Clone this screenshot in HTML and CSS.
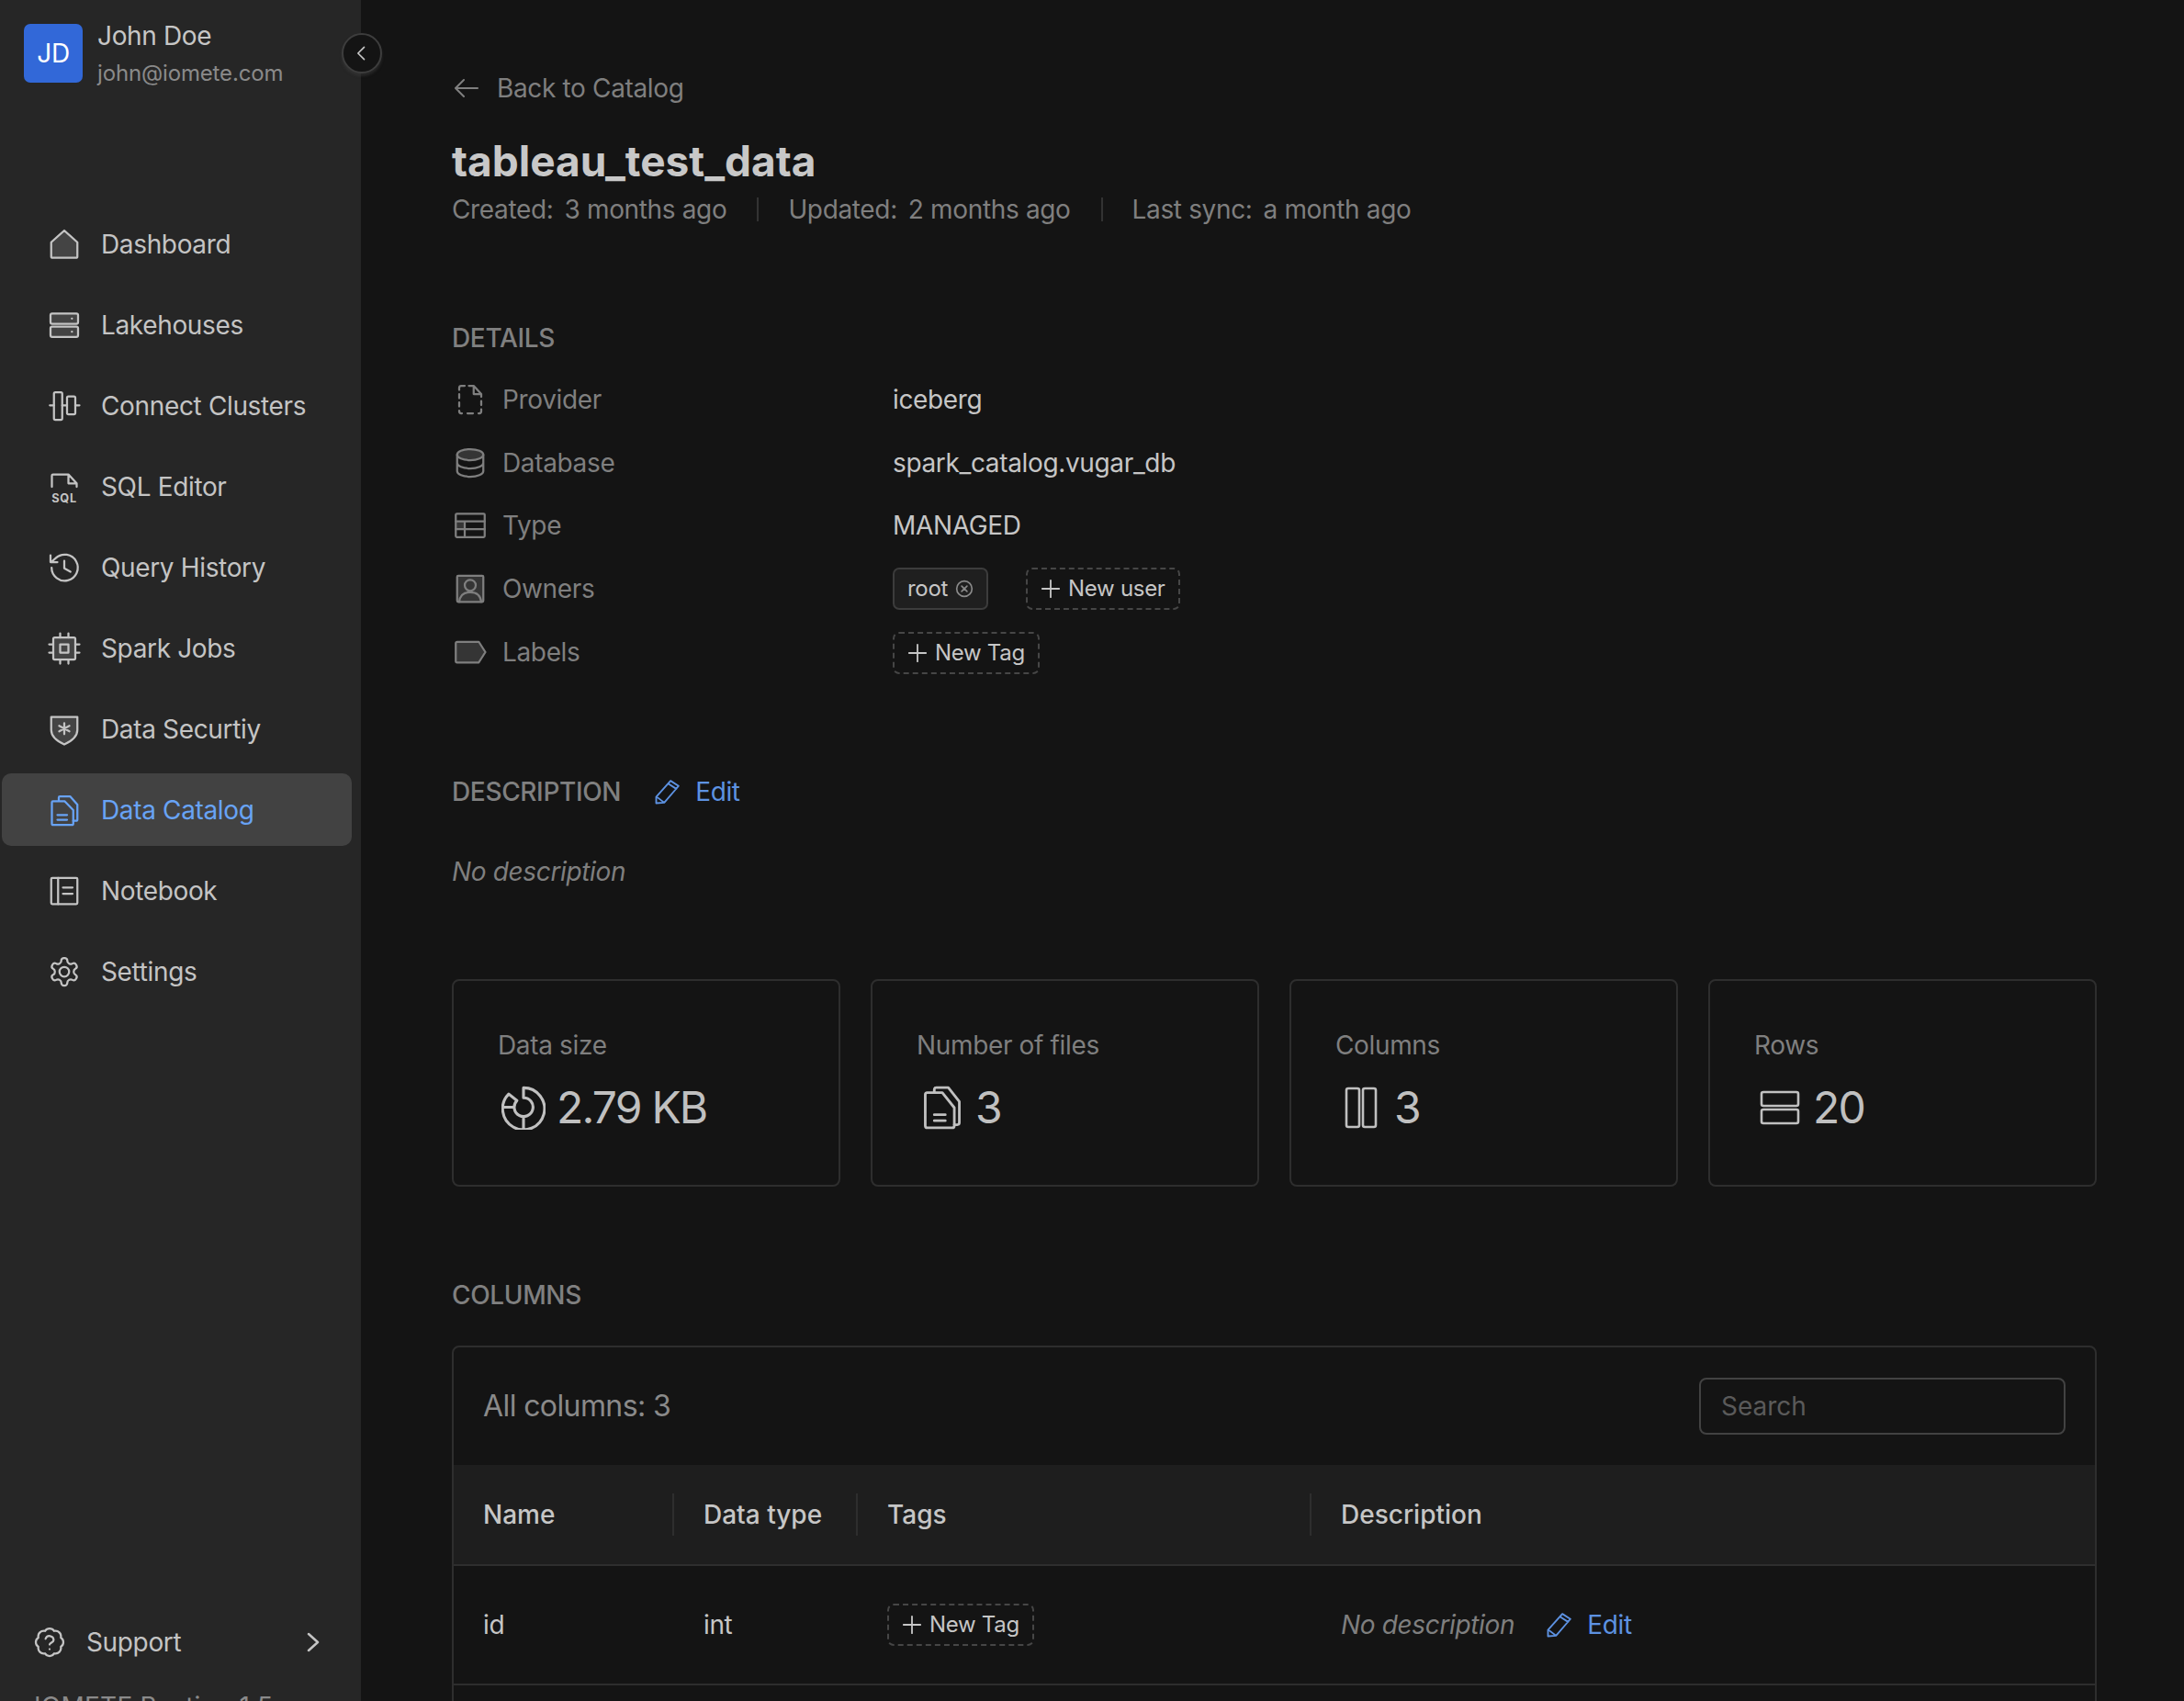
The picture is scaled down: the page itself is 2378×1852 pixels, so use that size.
FILE: index.html
```html
<!DOCTYPE html>
<html>
<head>
<meta charset="utf-8">
<title>tableau_test_data</title>
<link rel="stylesheet" href="styles.css">
</head>
<body>
<svg class="defs" xmlns="http://www.w3.org/2000/svg">
  <symbol id="i-home" viewBox="0 0 24 24"><path class="soft" d="M2.5 10.5 12 2l9.5 8.5V21a.8.8 0 0 1-.8.8H3.3a.8.8 0 0 1-.8-.8z"/></symbol>
  <symbol id="i-server" viewBox="0 0 24 24"><rect class="soft" x="2" y="3.5" width="20" height="7.5" rx="1.2"/><rect class="soft" x="2" y="13" width="20" height="7.5" rx="1.2"/><path d="M17.5 7.2h.1M17.5 16.8h.1"/></symbol>
  <symbol id="i-connect" viewBox="0 0 24 24"><rect x="4.5" y="2" width="6" height="20" rx="1"/><rect x="14" y="5" width="6" height="13" rx="1"/><path d="M1.5 11.5h3M10.5 11.500H14M20 11.5h3"/></symbol>
  <symbol id="i-sql" viewBox="0 0 24 24"><path d="M3 12V3.8a.8.8 0 0 1 .8-.8H15l6 6.500V12M15 3v6.500h6"/><text class="sqltxt" x="12" y="23">SQL</text></symbol>
  <symbol id="i-history" viewBox="0 0 24 24"><path d="M2.800 12a9.500 9.500 0 1 0 3-6.900L2.500 8M2 3v5h5M12 7v5.500l4.500 2.500"/></symbol>
  <symbol id="i-cpu" viewBox="0 0 24 24"><rect class="soft" x="4" y="4" width="16" height="16" rx="1"/><rect x="9" y="9" width="6" height="6"/><path d="M9 1v3M15 1v3M9 20v3M15 20v3M1 9h3M1 15h3M20 9h3M20 15h3"/></symbol>
  <symbol id="i-shield" viewBox="0 0 24 24"><path class="soft" d="M2.500 3h19v9.500c0 5-4 8-9.500 10.500-5.500-2.500-9.500-5.500-9.500-10.500z"/><path d="M12 7.500v8M8.300 9.500l7.400 4M15.700 9.500l-7.400 4"/></symbol>
  <symbol id="i-files" viewBox="0 0 24 24"><path d="M8 5V2.800a.8.800 0 0 1 .8-.8h7.400L21.500 8v11a.8.800 0 0 1-.8.800h-2.200"/><path d="M3 6.300a.8.800 0 0 1 .8-.8h8.400l6.300 6.500V22a.8.800 0 0 1-.8.800H3.800A.8.800 0 0 1 3 22zM7 15.500h7M7 19h7"/></symbol>
  <symbol id="i-notebook" viewBox="0 0 24 24"><rect x="2.500" y="2.500" width="19" height="19" rx=".8"/><path d="M7.500 2.500v19M11 9.500h7M11 14h7"/></symbol>
  <symbol id="i-gear" viewBox="0 0 24 24"><path d="M12.220 2h-.44a2 2 0 0 0-2 2v.18a2 2 0 0 1-1 1.730l-.43.250a2 2 0 0 1-2 0l-.15-.08a2 2 0 0 0-2.730.730l-.22.380a2 2 0 0 0 .730 2.730l.15.100a2 2 0 0 1 1 1.720v.510a2 2 0 0 1-1 1.740l-.15.090a2 2 0 0 0-.730 2.730l.22.380a2 2 0 0 0 2.730.730l.15-.08a2 2 0 0 1 2 0l.43.250a2 2 0 0 1 1 1.730V20a2 2 0 0 0 2 2h.44a2 2 0 0 0 2-2v-.18a2 2 0 0 1 1-1.730l.43-.25a2 2 0 0 1 2 0l.15.080a2 2 0 0 0 2.730-.73l.22-.39a2 2 0 0 0-.73-2.730l-.15-.08a2 2 0 0 1-1-1.740v-.5a2 2 0 0 1 1-1.740l.15-.09a2 2 0 0 0 .73-2.730l-.22-.38a2 2 0 0 0-2.730-.73l-.15.080a2 2 0 0 1-2 0l-.43-.25a2 2 0 0 1-1-1.730V4a2 2 0 0 0-2-2z"/><circle cx="12" cy="12" r="3.500"/></symbol>
  <symbol id="i-help" viewBox="0 0 24 24"><path d="M3.850 8.620a4 4 0 0 1 4.780-4.770 4 4 0 0 1 6.740 0 4 4 0 0 1 4.780 4.780 4 4 0 0 1 0 6.740 4 4 0 0 1-4.770 4.780 4 4 0 0 1-6.750 0 4 4 0 0 1-4.780-4.770 4 4 0 0 1 0-6.760Z"/><path d="M9.090 9.500a3 3 0 0 1 5.830 1c0 1.600-2.900 2-2.900 3.200M12 17h.01"/></symbol>
  <symbol id="i-dashfile" viewBox="0 0 24 24"><path d="M8 2H6M4 5V3.500A1.500 1.500 0 0 1 5.500 2M11 2h3.500L20 8v2M14.500 2v6H20M20 13v3M4 8v3M4 14v3M4 20v.5A1.500 1.500 0 0 0 5.500 22H6M10 22h4M18 22h.5a1.500 1.500 0 0 0 1.500-1.500V19"/></symbol>
  <symbol id="i-db" viewBox="0 0 24 24"><ellipse class="soft" cx="12" cy="6" rx="9.500" ry="4"/><path d="M2.500 6v12c0 2.200 4.300 4 9.500 4s9.500-1.800 9.500-4V6M2.500 12c0 2.200 4.300 4 9.500 4s9.500-1.800 9.500-4"/></symbol>
  <symbol id="i-table" viewBox="0 0 24 24"><rect class="soft noline" x="1.500" y="9" width="6.500" height="5.700"/><rect x="1.500" y="3.500" width="21" height="17" rx=".8"/><path d="M1.500 9h21M1.500 14.700h21M8 9v11.500"/></symbol>
  <symbol id="i-owner" viewBox="0 0 24 24"><rect class="soft" x="2.500" y="2.500" width="19" height="19" rx=".8"/><circle cx="12" cy="9.500" r="4"/><path d="M4 21.500c.5-4.500 3.500-7 8-7s7.500 2.500 8 7"/></symbol>
  <symbol id="i-label" viewBox="0 0 24 24"><path class="soft" d="M1.500 5.500a1 1 0 0 1 1-1h15.700l4.800 7.500-4.800 7.500H2.500a1 1 0 0 1-1-1z"/></symbol>
  <symbol id="i-pencil" viewBox="0 0 24 24"><path d="M2 22v-5.500L14.500 2.500l7 4.500L9 21.500zM12.500 5l7 4.500M2.500 16.500l6.500 5"/></symbol>
  <symbol id="i-pie" viewBox="2 1.500 20 20"><path d="M12 2.500A9.500 9.500 0 1 1 5.300 5.300L9 8.300A4.250 4.250 0 1 0 12 7zM2.600 11.300h5.200M12 15.500v6"/></symbol>
  <symbol id="i-doc2" viewBox="2 1 20 22"><path d="M8 4.500V3a1 1 0 0 1 1-1h6l5.500 7v10.500a1 1 0 0 1-1 1h-1.500"/><path d="M3.500 5.500a1 1 0 0 1 1-1h7.500l6 7.500v9a1 1 0 0 1-1 1H4.500a1 1 0 0 1-1-1zM8 15.500h5.500M8 18.500h5.500"/></symbol>
  <symbol id="i-cols" viewBox="0 0 24 24"><rect x="4" y="1.500" width="7" height="21" rx="1"/><rect x="13" y="1.500" width="7" height="21" rx="1"/></symbol>
  <symbol id="i-rows" viewBox="0 0 24 24"><rect x="2" y="3.500" width="20" height="7.500" rx="1"/><rect x="2" y="13" width="20" height="7.500" rx="1"/></symbol>
</svg>

<div class="app">
  <aside class="sidebar">
    <div class="profile">
      <div class="avatar">JD</div>
      <div class="who">
        <div class="who-name">John Doe</div>
        <div class="who-mail">john@iomete.com</div>
      </div>
    </div>
    <button class="collapse"><svg class="ico-sm" viewBox="0 0 24 24"><path d="M15 4l-8 8 8 8"/></svg></button>

    <nav class="nav">
      <a class="nav-item"><svg class="ico"><use href="#i-home"/></svg>Dashboard</a>
      <a class="nav-item"><svg class="ico"><use href="#i-server"/></svg>Lakehouses</a>
      <a class="nav-item"><svg class="ico"><use href="#i-connect"/></svg>Connect Clusters</a>
      <a class="nav-item"><svg class="ico"><use href="#i-sql"/></svg>SQL Editor</a>
      <a class="nav-item"><svg class="ico"><use href="#i-history"/></svg>Query History</a>
      <a class="nav-item"><svg class="ico"><use href="#i-cpu"/></svg>Spark Jobs</a>
      <a class="nav-item"><svg class="ico"><use href="#i-shield"/></svg>Data Securtiy</a>
      <a class="nav-item active"><svg class="ico"><use href="#i-files"/></svg>Data Catalog</a>
      <a class="nav-item"><svg class="ico"><use href="#i-notebook"/></svg>Notebook</a>
      <a class="nav-item"><svg class="ico"><use href="#i-gear"/></svg>Settings</a>
    </nav>

    <div class="support">
      <svg class="ico"><use href="#i-help"/></svg>
      <span class="support-txt">Support</span>
      <svg class="ico-chev" viewBox="0 0 24 24"><path d="M7 3l10 9-10 9"/></svg>
    </div>
    <div class="version">IOMETE Bastion 1.5</div>
  </aside>

  <main class="main">
    <a class="back"><svg class="ico-back" viewBox="0 0 28 24"><path d="M26 12H3M11 3l-9 9 9 9"/></svg>Back to Catalog</a>
    <h1 class="title">tableau_test_data</h1>
    <div class="meta">
      <span>Created:</span><span class="meta-val">3 months ago</span>
      <i class="meta-sep"></i>
      <span>Updated:</span><span class="meta-val">2 months ago</span>
      <i class="meta-sep"></i>
      <span>Last sync:</span><span class="meta-val">a month ago</span>
    </div>

    <h2 class="section details-head">DETAILS</h2>
    <div class="details">
      <div class="d-label"><svg class="ico"><use href="#i-dashfile"/></svg>Provider</div>
      <div class="d-value">iceberg</div>
      <div class="d-label"><svg class="ico"><use href="#i-db"/></svg>Database</div>
      <div class="d-value">spark_catalog.vugar_db</div>
      <div class="d-label"><svg class="ico"><use href="#i-table"/></svg>Type</div>
      <div class="d-value">MANAGED</div>
      <div class="d-label"><svg class="ico"><use href="#i-owner"/></svg>Owners</div>
      <div class="d-value chips">
        <span class="chip">root<svg class="ico-x" viewBox="0 0 24 24"><circle cx="12" cy="12" r="10"/><path d="M8.500 8.500l7 7M15.500 8.500l-7 7"/></svg></span>
        <span class="chip dashed"><svg class="ico-plus" viewBox="0 0 24 24"><path d="M12 2v20M2 12h20"/></svg>New user</span>
      </div>
      <div class="d-label"><svg class="ico"><use href="#i-label"/></svg>Labels</div>
      <div class="d-value d-end">
        <span class="chip dashed"><svg class="ico-plus" viewBox="0 0 24 24"><path d="M12 2v20M2 12h20"/></svg>New Tag</span>
      </div>
    </div>

    <div class="desc-head">
      <h2 class="section">DESCRIPTION</h2>
      <a class="edit"><svg class="ico-edit"><use href="#i-pencil"/></svg>Edit</a>
    </div>
    <p class="no-desc">No description</p>

    <div class="cards">
      <div class="card">
        <div class="card-label">Data size</div>
        <div class="card-value"><svg class="ico-big"><use href="#i-pie"/></svg>2.79 KB</div>
      </div>
      <div class="card">
        <div class="card-label">Number of files</div>
        <div class="card-value"><svg class="ico-big"><use href="#i-doc2"/></svg>3</div>
      </div>
      <div class="card">
        <div class="card-label">Columns</div>
        <div class="card-value"><svg class="ico-big"><use href="#i-cols"/></svg>3</div>
      </div>
      <div class="card">
        <div class="card-label">Rows</div>
        <div class="card-value"><svg class="ico-big"><use href="#i-rows"/></svg>20</div>
      </div>
    </div>

    <h2 class="section columns-head">COLUMNS</h2>
    <div class="tbl-box">
      <div class="toolbar">
        <span class="all-cols">All columns: 3</span>
        <input class="search" type="text" placeholder="Search">
      </div>
      <table class="tbl">
        <colgroup>
          <col class="c-name"><col class="c-type"><col class="c-tags"><col>
        </colgroup>
        <thead>
          <tr>
            <th><span class="th-in">Name</span></th>
            <th><span class="th-in">Data type</span></th>
            <th><span class="th-in">Tags</span></th>
            <th><span class="th-in">Description</span></th>
          </tr>
        </thead>
        <tbody>
          <tr>
            <td>id</td>
            <td>int</td>
            <td><span class="chip dashed"><svg class="ico-plus" viewBox="0 0 24 24"><path d="M12 2v20M2 12h20"/></svg>New Tag</span></td>
            <td>
              <div class="td-desc">
                <span class="no-desc-cell">No description</span>
                <a class="edit"><svg class="ico-edit"><use href="#i-pencil"/></svg>Edit</a>
              </div>
            </td>
          </tr>
        </tbody>
      </table>
    </div>
  </main>
</div>
</body>
</html>
```

FILE: styles.css
```css
html, body {
  margin: 0;
  height: 100%;
  overflow: hidden;
  background: #141414;
}
body {
  font-family: "Inter", "Liberation Sans", sans-serif;
  font-size: 28px;
  line-height: 40px;
  letter-spacing: -0.35px;
  color: #c6c6c6;
}
.defs {
  display: none;
}
h1, h2, p {
  margin: 0;
  font-weight: normal;
}
svg {
  fill: none;
  stroke: currentColor;
  stroke-width: 1.5;
  stroke-linecap: round;
  stroke-linejoin: round;
  flex: none;
}
.soft {
  fill: rgba(255, 255, 255, 0.14);
}
.noline {
  stroke: none;
}
.sqltxt {
  fill: currentColor;
  stroke: none;
  font-size: 8.5px;
  font-weight: 700;
  text-anchor: middle;
  letter-spacing: 0.5px;
}
.ico {
  width: 36px;
  height: 36px;
}
.ico-sm {
  width: 20px;
  height: 20px;
  stroke-width: 2;
}
.ico-chev {
  width: 24px;
  height: 24px;
  stroke-width: 2.5;
}

.app {
  display: flex;
  align-items: flex-start;
}

/* sidebar */
.sidebar {
  position: relative;
  flex: none;
  box-sizing: border-box;
  width: 393px;
  height: 1900px;
  padding: 26px 0 22px;
  display: flex;
  flex-direction: column;
  background: #262626;
}
.profile {
  display: flex;
  gap: 16px;
  padding-left: 26px;
}
.avatar {
  width: 64px;
  height: 64px;
  border-radius: 7px;
  background: #3268d8;
  color: #fff;
  display: flex;
  align-items: center;
  justify-content: center;
  font-size: 28px;
}
.who-name {
  line-height: 36px;
  margin-top: -5px;
}
.who-mail {
  margin-top: 6px;
  font-size: 24px;
  line-height: 34px;
  letter-spacing: -0.15px;
  color: #8a8a8a;
}
.collapse {
  position: absolute;
  top: 36px;
  left: 372px;
  width: 44px;
  height: 44px;
  padding: 0;
  border: 2px solid #3d3d3d;
  border-radius: 50%;
  background: #141414;
  color: #c6c6c6;
  display: flex;
  align-items: center;
  justify-content: center;
  box-shadow: 0 3px 3px rgba(60, 60, 60, 0.5);
}
.nav {
  margin-top: 129px;
  padding: 0 10px 0 2px;
  display: flex;
  flex-direction: column;
  gap: 9px;
}
.nav-item {
  height: 79px;
  padding-left: 50px;
  display: flex;
  align-items: center;
  gap: 22px;
  border-radius: 10px;
  color: #c4c4c4;
}
.nav-item.active {
  background: #424242;
  color: #68a3f5;
}
.support {
  margin-top: auto;
  height: 44px;
  padding: 0 40px 0 36px;
  display: flex;
  align-items: center;
  gap: 22px;
  color: #c4c4c4;
}
.support-txt {
  flex: 1;
}
.version {
  margin-top: 28px;
  padding-left: 37px;
  font-size: 28px;
  letter-spacing: 0.25px;
  color: #8a8a8a;
}

/* main */
.main {
  flex: 1;
  min-width: 0;
  padding: 76px 95px 0 99px;
  color: #7f7f7f;
}
.back {
  display: flex;
  align-items: center;
  gap: 19px;
}
.ico-back {
  width: 28px;
  height: 24px;
  margin-left: 2px;
  stroke-width: 2;
}
.title {
  margin-top: 31px;
  font-size: 46px;
  line-height: 56px;
  font-weight: 700;
  letter-spacing: 0;
  color: #c8c8c8;
}
.meta {
  margin-top: 5px;
  display: flex;
  align-items: center;
}
.meta-val {
  margin-left: 12px;
}
.meta-sep {
  width: 2px;
  height: 26px;
  margin: 0 32px 0 33px;
  background: #333;
}
.section {
  font-size: 28px;
  line-height: 40px;
  font-weight: 500;
  color: #808080;
}
.details-head {
  margin-top: 100px;
}
.details {
  margin-top: 24px;
  display: grid;
  grid-template-columns: 480px 1fr;
  grid-template-rows: repeat(4, 46px) 48px;
  row-gap: 22.5px;
  align-items: center;
}
.d-end {
  align-self: end;
}
.d-label {
  display: flex;
  align-items: center;
  gap: 17px;
  padding-left: 2px;
}
.d-value {
  color: #c6c6c6;
}
.chips {
  display: flex;
  gap: 41px;
}
.chip {
  box-sizing: border-box;
  display: inline-flex;
  align-items: center;
  height: 46px;
  padding: 0 14px;
  gap: 8px;
  border: 2px solid #3c3c3c;
  border-radius: 7px;
  background: #1f1f1f;
  font-size: 24px;
  line-height: 40px;
  letter-spacing: -0.3px;
  color: #c6c6c6;
}
.chip.dashed {
  border: 2px dashed #464646;
  background: none;
}
.ico-x {
  width: 20px;
  height: 20px;
  color: #8a8a8a;
  stroke-width: 2;
}
.ico-plus {
  width: 22px;
  height: 22px;
  stroke-width: 2;
}
.desc-head {
  margin-top: 108px;
  display: flex;
  align-items: center;
  gap: 36px;
}
.edit {
  display: flex;
  align-items: center;
  gap: 15px;
  color: #5d92e2;
}
.ico-edit {
  width: 30px;
  height: 30px;
}
.no-desc {
  margin-top: 47px;
  font-style: italic;
}
.cards {
  margin-top: 97px;
  display: grid;
  grid-template-columns: repeat(4, 1fr);
  gap: 33px;
}
.card {
  box-sizing: border-box;
  height: 226px;
  padding: 50px 48px 0;
  border: 2px solid #2e2e2e;
  border-radius: 8px;
}
.card-label {
  color: #7f7f7f;
}
.card-value {
  margin-top: 18px;
  display: flex;
  align-items: center;
  gap: 12px;
  font-size: 48px;
  line-height: 60px;
  letter-spacing: -1.8px;
  color: #c0c0c0;
}
.ico-big {
  width: 48px;
  height: 48px;
  margin-left: 4px;
  stroke-width: 1.3;
}
.columns-head {
  margin-top: 98px;
}
.tbl-box {
  margin-top: 35px;
  min-height: 480px;
  border: 2px solid #2e2e2e;
  border-radius: 8px;
}
.toolbar {
  box-sizing: border-box;
  height: 128px;
  padding: 0 32px;
  display: flex;
  align-items: center;
  justify-content: space-between;
}
.all-cols {
  font-size: 32px;
  letter-spacing: -0.6px;
  color: #8a8a8a;
}
.search {
  box-sizing: border-box;
  width: 399px;
  height: 62px;
  padding: 0 22px;
  border: 2px solid #424242;
  border-radius: 8px;
  outline: none;
  background: #141414;
  font-family: inherit;
  font-size: 28px;
  color: #c6c6c6;
}
.search::placeholder {
  color: #5a5a5a;
}
.tbl {
  width: 100%;
  table-layout: fixed;
  border-collapse: collapse;
}
.c-name { width: 240px; }
.c-type { width: 200px; }
.c-tags { width: 494px; }
.tbl th {
  height: 108px;
  padding: 0;
  background: #1e1e1e;
  border-bottom: 2px solid #2e2e2e;
  text-align: left;
  font-weight: 500;
  letter-spacing: 0;
  color: #c6c6c6;
}
.th-in {
  display: block;
  height: 46px;
  line-height: 46px;
  padding-left: 32px;
  box-shadow: -2px 0 0 #2e2e2e;
}
.tbl th:first-child .th-in {
  box-shadow: none;
}
.tbl td {
  box-sizing: border-box;
  height: 130px;
  padding: 0 0 0 32px;
  border-bottom: 2px solid #2e2e2e;
  color: #c6c6c6;
}
.td-desc {
  display: flex;
  align-items: center;
  gap: 34px;
}
.no-desc-cell {
  font-style: italic;
  color: #7f7f7f;
}
```
